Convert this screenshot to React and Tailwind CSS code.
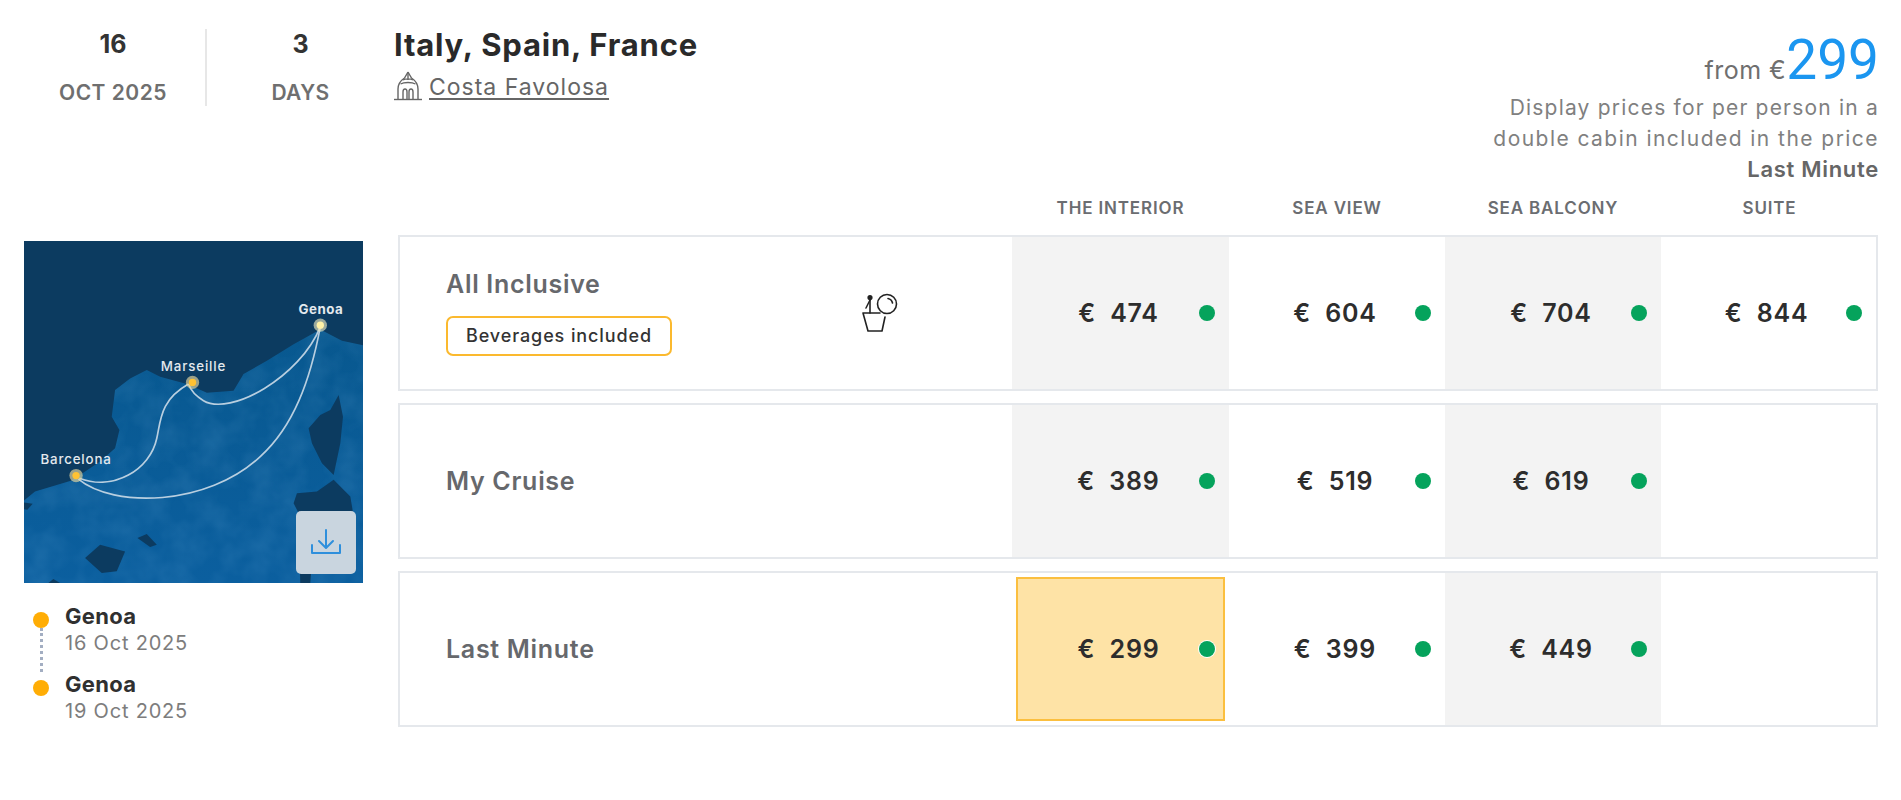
const F = { fontFamily: '"Inter","Liberation Sans",sans-serif' };
const COAST = "M72 812 L105 785 L215 752 L300 695 L345 655 L358 600 L335 560 L345 480 L390 445 L440 420 L480 440 L560 462 L620 488 L700 482 L730 432 L800 392 L880 342 L960 298 L1025 332 L1088 345 L1088 1060 L72 1060 Z";

function MapArt() {
  return (
    <svg viewBox="72 32 1016 1028" preserveAspectRatio="none" className="block w-full h-full">
      <defs>
        <linearGradient id="sea" x1="0" y1="0" x2="0" y2="1">
          <stop offset="0" stopColor="#08588f" />
          <stop offset="1" stopColor="#0b5f9f" />
        </linearGradient>
        <clipPath id="land"><path d={COAST} /></clipPath>
        <filter id="tex" x="72" y="32" width="1016" height="1028" filterUnits="userSpaceOnUse">
          <feTurbulence type="fractalNoise" baseFrequency="0.012" numOctaves="3" seed="4" />
          <feColorMatrix values="0 0 0 0 0.25  0 0 0 0 0.55  0 0 0 0 0.85  0 0 0 0.5 -0.16" />
        </filter>
      </defs>
      <rect x="72" y="32" width="1016" height="1028" fill="#0c3b60" />
      <path d={COAST} fill="url(#sea)" />
      <g clipPath="url(#land)">
        <rect x="72" y="32" width="1016" height="1028" filter="url(#tex)" opacity="0.45" />
      </g>
      <path d="M1015 495 L1028 560 L1020 640 L1000 735 L965 700 L935 640 L925 595 L960 555 L990 540 Z" fill="#0c3b60" />
      <path d="M1000 750 L1050 800 L1060 860 L990 850 L945 860 L930 1060 L900 1060 L895 850 L880 820 L890 790 L950 785 Z" fill="#0c3b60" />
      <path d="M255 985 L300 945 L375 965 L350 1025 L305 1030 Z" fill="#0c3b60" />
      <path d="M412 925 L440 913 L470 945 L450 952 Z" fill="#0c3b60" />
      <path d="M145 1060 L160 1048 L180 1060 Z" fill="#0c3b60" />
      <path d="M72 818 L98 822 L82 840 L72 838 Z" fill="#0c3b60" />
      <g fill="none" stroke="#b9cfe0" strokeWidth="5">
        <path d="M960 290 C900 440 690 560 610 512 C585 497 572 482 565 462" />
        <path d="M565 462 C480 510 482 570 470 625 C450 720 340 785 238 745" />
        <path d="M235 748 C340 835 620 830 780 680 C880 590 930 450 960 290" />
      </g>
      <circle cx="960" cy="285" r="20" fill="#e8e6c0" opacity="0.65" />
      <circle cx="960" cy="285" r="11" fill="#fff2a8" />
      <circle cx="577" cy="457" r="20" fill="#e8d9a0" opacity="0.65" />
      <circle cx="577" cy="457" r="11" fill="#ffc233" />
      <circle cx="228" cy="737" r="20" fill="#e8d9a0" opacity="0.65" />
      <circle cx="228" cy="737" r="11" fill="#ffc233" />
      <g fill="#e4e9ee" fontSize="38" fontWeight="500" style={F} textAnchor="middle">
        <text x="962" y="250" fontWeight="700" fontSize="40" letterSpacing="1.5">Genoa</text>
        <text x="580" y="423" fontSize="40" letterSpacing="2.5">Marseille</text>
        <text x="228" y="701" fontSize="40" letterSpacing="2.5">Barcelona</text>
      </g>
    </svg>
  );
}

function Download() {
  return (
    <svg width="32" height="32" viewBox="0 0 32 32" fill="none" stroke="#2e8fdc" strokeWidth="2" strokeLinecap="round" strokeLinejoin="round">
      <path d="M16 3 V20" />
      <path d="M9 14 L16 21 L23 14" />
      <path d="M2 18 V26 H30 V18" />
    </svg>
  );
}

function Ship() {
  return (
    <svg width="28" height="30" viewBox="0 0 28 30" fill="none" stroke="#666" strokeWidth="1.4" className="shrink-0">
      <path d="M14 1 L17.5 7 C22 10 24 14 24 18 L24 28 M14 1 L10.5 7 C6 10 4 14 4 18 L4 28" />
      <path d="M14 1 L14 9 M9 9 C11 7.5 17 7.5 19 9 M6.5 13 C10 11 18 11 21.5 13" />
      <path d="M9 28 V21 C9 17 13 17 13 21 V28 M15 28 V21 C15 17 19 17 19 21 V28" />
      <path d="M0 28.5 H28" />
    </svg>
  );
}

function Drink() {
  return (
    <svg width="60" height="60" viewBox="0 0 60 60" fill="none" stroke="#222" strokeWidth="1.6" strokeLinecap="round" strokeLinejoin="round">
      <path d="M23 32 H40 M23 32 L28 50 H42 L45 36" />
      <path d="M30 32 V19" />
      <path d="M26 27 L30 19" />
      <circle cx="30" cy="16.5" r="1.8" fill="#222" />
      <circle cx="47" cy="23" r="9.5" />
      <path d="M48 17.5 C50.5 18 52 19.5 52.5 22" />
    </svg>
  );
}

function Cell({ price, shaded, selected }) {
  if (price === null) return <div className={shaded ? "bg-[#f3f3f3]" : ""} />;
  return (
    <div className={`relative flex items-center justify-center ${shaded ? "bg-[#f3f3f3]" : ""}`}>
      {selected && <div className="absolute inset-x-[4px] top-[4px] bottom-[4px] bg-[#fee3a6] border-2 border-[#fbbf3f]" />}
      <span className="relative text-[25px] font-semibold text-[#2d2d2d] tracking-[0.8px] whitespace-pre pr-[4px] mt-[2px]">€  {price}</span>
      <span className={`absolute right-[14px] top-1/2 -translate-y-1/2 w-[16px] h-[16px] rounded-full bg-[#05a35c] ${selected ? "ring-1 ring-white" : ""}`} />
    </div>
  );
}

function Row({ label, prices, shades, selected, extra }) {
  return (
    <div className="w-[1480px] grid grid-cols-[612px_217px_216px_216px_215px] h-[156px] border-2 border-[#e5e8ec]">
      <div className="relative flex flex-col justify-center pl-[46px]">
        <div className={`relative text-[25px] font-semibold text-[#66686c] tracking-[0.7px] ${extra ? "-top-[2px]" : "top-[1px]"}`}>{label}</div>
        {extra && (
          <>
            <div className="mt-[10px] w-[226px] h-[40px] flex items-center justify-center border-2 border-[#fbb92e] rounded-[7px] text-[18px] font-medium text-[#333] tracking-[0.9px] mb-[2px]">Beverages included</div>
            <div className="absolute left-[440px] top-[44px]"><Drink /></div>
          </>
        )}
      </div>
      {prices.map((p, i) => (
        <Cell key={i} price={p} shaded={shades[i]} selected={selected === i} />
      ))}
    </div>
  );
}

const Head = ({ children }) => (
  <div className="text-center text-[17px] font-semibold text-[#6b6d71] tracking-[0.85px]">{children}</div>
);

export default function App() {
  return (
    <div className="w-[1901px] h-[800px] bg-white overflow-hidden" style={F}>
      <div className="flex h-[195px] pt-[29px] pr-[22px]">
        <div className="w-[207px] h-[77px] border-r-2 border-[#e7e7e7] pl-[21px] flex flex-col items-center">
          <div className="text-[25px] font-bold leading-[30px] text-[#333]">16</div>
          <div className="mt-[20px] text-[21px] font-semibold leading-[28px] text-[#6f6f6f] tracking-[0.5px]">OCT 2025</div>
        </div>
        <div className="w-[187px] flex flex-col items-center">
          <div className="text-[25px] font-bold leading-[30px] text-[#333]">3</div>
          <div className="mt-[20px] text-[21px] font-semibold leading-[28px] text-[#6f6f6f] tracking-[0.4px]">DAYS</div>
        </div>
        <div>
          <div className="text-[31px] font-bold leading-[32px] text-[#2a2a2a] tracking-[0.8px]">Italy, Spain, France</div>
          <div className="mt-[10px] flex items-end gap-[7px]">
            <Ship />
            <span className="text-[23px] leading-[28px] text-[#666] underline underline-offset-[3px] tracking-[1px]">Costa Favolosa</span>
          </div>
        </div>
        <div className="ml-auto text-right -mt-[1px]">
          <div className="flex items-end justify-end h-[63px]">
            <span className="text-[25px] text-[#6f6f6f] leading-[34px] mb-[4px] tracking-[0.5px]">from €</span>
            <span className="text-[55px] leading-[62px] text-[#1b96f0] font-normal" style={{ fontFamily: "Roboto, sans-serif" }}>299</span>
          </div>
          <div className="mt-[1px] text-[21px] leading-[31px] text-[#808080] tracking-[1.2px]">Display prices for per person in a</div>
          <div className="text-[21px] leading-[31px] text-[#808080] tracking-[1.45px]">double cabin included in the price</div>
          <div className="text-[22px] leading-[31px] font-semibold text-[#666] tracking-[0.7px]">Last Minute</div>
        </div>
      </div>

      <div className="grid grid-cols-[1012px_217px_216px_216px_217px] items-center h-[28px]">
        <div />
        <Head>THE INTERIOR</Head>
        <Head>SEA VIEW</Head>
        <Head>SEA BALCONY</Head>
        <Head>SUITE</Head>
      </div>

      <div className="flex mt-[12px]">
        <div className="w-[398px] shrink-0 pl-[24px] pt-[6px]">
          <div className="relative w-[339px] h-[342px]">
            <MapArt />
            <div className="absolute right-[7px] bottom-[9px] w-[60px] h-[63px] rounded-[5px] bg-[#c9d5df] flex items-center justify-center">
              <Download />
            </div>
          </div>
          <div className="relative mt-[21px] pl-[41px]">
            <div className="absolute left-[16px] top-[24px] h-[44px] border-l-[3px] border-dotted border-[#a3aec2]" />
            <div className="absolute left-[9px] top-[8px] w-[16px] h-[16px] rounded-full bg-[#ffad05]" />
            <div className="absolute left-[9px] top-[76px] w-[16px] h-[16px] rounded-full bg-[#ffad05]" />
            <div className="text-[22px] leading-[24px] font-bold text-[#303030] tracking-[0.3px]">Genoa</div>
            <div className="text-[20px] leading-[30px] text-[#7d7d7d] tracking-[0.8px] h-[44px]">16 Oct 2025</div>
            <div className="text-[22px] leading-[24px] font-bold text-[#303030] tracking-[0.3px]">Genoa</div>
            <div className="text-[20px] leading-[30px] text-[#7d7d7d] tracking-[0.8px]">19 Oct 2025</div>
          </div>
        </div>
        <div className="flex flex-col gap-[12px]">
          <Row label="All Inclusive" extra prices={["474", "604", "704", "844"]} shades={[true, false, true, false]} />
          <Row label="My Cruise" prices={["389", "519", "619", null]} shades={[true, false, true, false]} />
          <Row label="Last Minute" selected={0} prices={["299", "399", "449", null]} shades={[false, false, true, false]} />
        </div>
      </div>
    </div>
  );
}
